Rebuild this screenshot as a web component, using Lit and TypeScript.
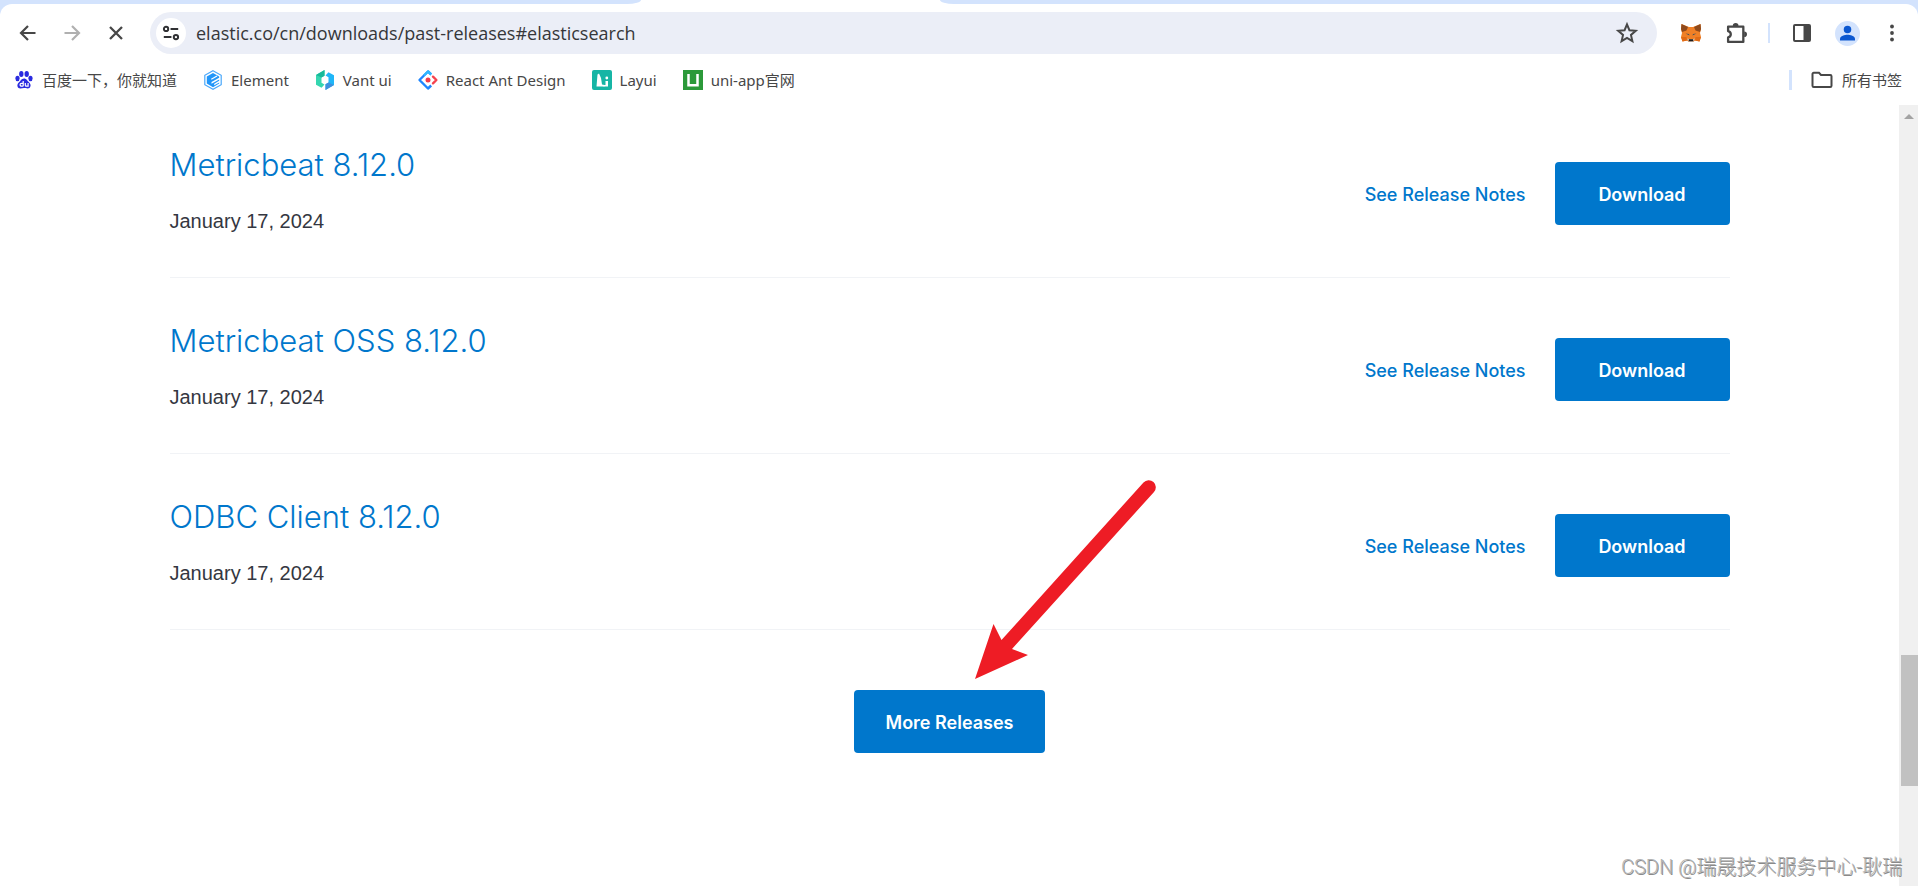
import { LitElement, html, css, svg, nothing } from 'lit';
import { customElement, property } from 'lit/decorators.js';

interface Release {
  name: string;
  date: string;
}

const releases: Release[] = [
  { name: 'Metricbeat 8.12.0', date: 'January 17, 2024' },
  { name: 'Metricbeat OSS 8.12.0', date: 'January 17, 2024' },
  { name: 'ODBC Client 8.12.0', date: 'January 17, 2024' },
];

const icons: Record<string, unknown> = {
  back: svg`<path d="M17.500 10H3.500M10 3 3 10l7 7" fill="none" stroke="#474747" stroke-width="2.200"/>`,
  forward: svg`<path d="M2.500 10h14M10 3l7 7-7 7" fill="none" stroke="#b0b0b0" stroke-width="2.200"/>`,
  stop: svg`<path d="M4 4l12 12M16 4 4 16" fill="none" stroke="#474747" stroke-width="2.300"/>`,
  tune: svg`<g fill="none" stroke="#303134" stroke-width="2.200"><circle cx="4.500" cy="5.500" r="2.400"/><path d="M9.500 5.500H18M2 14.500H10.500"/><circle cx="15.500" cy="14.500" r="2.400"/></g>`,
  star: svg`<path d="M10 2.200 12.200 7.500 18 8 13.600 11.800 14.900 17.400 10 14.400 5.100 17.400 6.400 11.800 2 8 7.800 7.500Z" fill="none" stroke="#474747" stroke-width="1.800" stroke-linejoin="miter"/>`,
  fox: svg`
    <path d="M0.500 1 8 4h4l7.500-3 .5 5-1 4 1 4-1.500 4.500L14 17.500 12 19H8l-2-1.500-4.500 1L0 14l1-4L0 6Z" fill="#f08026"/>
    <path d="M.5 1 7 4 5.500 7.500 1 9 0 6ZM19.500 1 13 4l1.500 3.500L19 9l1-3Z" fill="#8f4a1c"/>
    <path d="M0 14h5.500l.5 3.500-4.500 1ZM20 14h-5.500l-.5 3.500 4.500 1Z" fill="#e06a15"/>
    <path d="M6 15.500 8 19h4l2-3.500-2 .5H8Z" fill="#d0bfb2"/>
    <path d="M8 16.300h4l.4 2h-4.800Z" fill="#1d1a19"/>
    <path d="M4.500 10.500 8 11l.5 1.600ZM15.500 10.500 12 11l-.5 1.600Z" fill="#43505e"/>`,
  puzzle: svg`
    <path d="M2 3.500h14.500v14.500H2v-4.200c3.400-.9 3.400-5.200 0-6.100Z" fill="none" stroke="#474747" stroke-width="2.200" stroke-linejoin="round"/>
    <path d="M6.500 2.800a2.700 2.700 0 0 1 5.400 0ZM17.300 8a2.700 2.700 0 0 1 0 5.400Z" fill="#474747"/>`,
  panel: svg`<rect x="2" y="2" width="16" height="16" rx="1" fill="none" stroke="#474747" stroke-width="2"/><path d="M11.500 2H18v16h-6.500Z" fill="#474747"/>`,
  person: svg`<circle cx="10" cy="10" r="10" fill="#d3e3fd"/><circle cx="10" cy="6.800" r="3" fill="#0b57d0"/><path d="M4 15.500v-1.200c0-2.300 4-3.300 6-3.300s6 1 6 3.300v1.200Z" fill="#0b57d0"/>`,
  more: svg`<g fill="#474747"><circle cx="10" cy="3.500" r="1.900"/><circle cx="10" cy="10" r="1.900"/><circle cx="10" cy="16.500" r="1.900"/></g>`,
  folder: svg`<path d="M.5 4c0-.7.500-1.200 1.200-1.200h5.300l2 2.200h9.300c.7 0 1.200.5 1.200 1.200v9.600c0 .7-.5 1.200-1.200 1.200H1.700C1 17 .5 16.500 .5 15.800Z" fill="none" stroke="#474747" stroke-width="2"/>`,
  baidu: svg`
    <g fill="#2a2be0"><ellipse cx="3.500" cy="8.500" rx="2.100" ry="2.700"/><ellipse cx="7.300" cy="4" rx="2.200" ry="2.900"/><ellipse cx="12.700" cy="4" rx="2.200" ry="2.900"/><ellipse cx="16.500" cy="8.500" rx="2.100" ry="2.700"/>
    <path d="M10 8.500c2.600 0 3.300 2.400 5.200 4 2.600 2.300 1.300 6-1.600 6-1.300 0-2.200-.4-3.600-.4s-2.300.4-3.600.4c-3 0-4.200-3.700-1.600-6 2-1.700 2.600-4 5.200-4Z"/></g>
    <path d="M9.200 11v5.200M9.200 13.300H7.500a1.400 1.400 0 0 0 0 2.900h1.700M11.300 13v2.200c0 .7.400 1 1 1h1.800V13" fill="none" stroke="#fff" stroke-width="1.200"/>`,
  element: svg`
    <path d="M10 .7 18.200 5.300v9.400L10 19.300 1.800 14.700V5.300Z" fill="#fff" stroke="#4aa8fb" stroke-width="1.200"/>
    <path d="M10 3 16.200 6.500v1.300L8.500 12v1.800l7.700-4.300v1.300l-5 3v1.500l5-2.700v1L10 17.200 3.800 13.600V6.500Z" fill="#2196f9"/>
    <path d="M8.300 9.200 14 6" stroke="#fff" stroke-width="1.200"/>`,
  vant: svg`
    <path d="M9.500 0v5.800L6.500 7.500v5.200l3 1.800-3 3.200-5.500-3V5Z" fill="#35d6b0"/>
    <path d="M9.500 0v5.800L6.500 7.500 1 5Z" fill="#18b99a"/>
    <path d="M10.500 20v-5.800l3-1.700V7.300l-3-1.800 3-3.200 5.500 3V15Z" fill="#1fb6f8"/>
    <path d="M10.500 20v-5.800l3-1.700L19 15Z" fill="#3f8fdc"/>`,
  ant: svg`
    <path d="M13.200 4.500 10 1.500 1.500 10l8.500 8.500 3.200-3" fill="none" stroke="#1e86ff" stroke-width="2.400" stroke-linejoin="round"/>
    <path d="M13.200 4.500 10 1.500 6 5.500" fill="none" stroke="#2fb8ff" stroke-width="2.400" stroke-linejoin="round"/>
    <path d="M15 6.700 18.400 10 15 13.300" fill="none" stroke="#f5434f" stroke-width="2.400" stroke-linejoin="round" stroke-linecap="round"/>
    <circle cx="10" cy="10" r="2.500" fill="#f23b4c"/>`,
  layui: svg`<rect width="20" height="20" rx="2" fill="#16b5a5"/><path d="M4.500 16.500 5.500 4.500 7 3.500 9 8l1 6.500 2.500.5v1.500Z" fill="#fff"/><circle cx="14.800" cy="8" r="1.400" fill="#fff"/><path d="M11.500 16.500V15H13.500V11h2.500v5.500Z" fill="#fff"/>`,
  uniapp: svg`<rect width="20" height="20" fill="#2b9939"/><path d="M5.500 4v11.300h9V4" fill="none" stroke="#fff" stroke-width="2.500"/>`,
};

@customElement('ui-icon')
class UiIcon extends LitElement {
  @property() name = '';
  @property({ type: Number }) size = 20;

  static styles = css`
    :host { display: inline-flex; flex: none; }
    .glyph { display: block; overflow: visible; }
  `;

  render() {
    return html`<svg class="glyph" width=${this.size} height=${this.size} viewBox="0 0 20 20" aria-hidden="true">${icons[this.name] ?? nothing}</svg>`;
  }
}

@customElement('browser-bar')
class BrowserBar extends LitElement {
  static styles = css`
    :host {
      display: block;
      background: #d3e3fd;
      font-family: 'Noto Sans', 'Noto Sans CJK SC', sans-serif;
      color: #474747;
    }
    .tabs { display: flex; height: 4px; background: #fff; }
    .tab-before { width: 641px; background: #d3e3fd; border-bottom-right-radius: 14px 4px; }
    .tab-active { width: 299px; }
    .tab-after { flex: 1; background: #d3e3fd; border-bottom-left-radius: 14px 4px; }
    .panel { background: #fff; border-radius: 12px 12px 0 0; padding-bottom: 7px; }
    .toolbar { display: flex; align-items: center; height: 58px; padding: 0 10px 0 12px; }
    .nav { display: flex; gap: 12px; padding-right: 18px; }
    .tool {
      display: inline-flex;
      align-items: center;
      justify-content: center;
      width: 32px;
      height: 32px;
      padding: 0;
      border: 0;
      border-radius: 16px;
      background: none;
    }
    .address {
      display: flex;
      flex: 1;
      align-items: center;
      height: 42px;
      box-sizing: border-box;
      padding: 0 14px 0 6px;
      border-radius: 21px;
      background: #ebeef7;
    }
    .site { width: 30px; height: 30px; background: #fff; }
    .url {
      flex: 1;
      min-width: 0;
      padding: 0;
      margin-left: 10px;
      border: 0;
      outline: 0;
      background: none;
      font: 18px/24px 'Open Sans', sans-serif;
      color: #36373a;
    }
    .extras { display: flex; align-items: center; gap: 13px; padding-left: 18px; }
    .rule { width: 2px; height: 20px; margin: 0 3px; background: #d3e3fd; }
    .bookmarks { display: flex; align-items: center; height: 36px; gap: 26px; padding: 0 16px 0 14px; }
    .bookmark {
      display: inline-flex;
      align-items: center;
      gap: 8px;
      font-size: 15px;
      line-height: 20px;
      white-space: nowrap;
      color: #474747;
      text-decoration: none;
    }
    .all {
      gap: 10px;
      margin-left: auto;
      padding: 0 0 0 20px;
      border: 0;
      border-left: 3px solid #d3e3fd;
      background: none;
      font-family: inherit;
    }
  `;

  private tool(icon: string, label: string, size = 20) {
    return html`<button class="tool" type="button" aria-label=${label}><ui-icon name=${icon} size=${size}></ui-icon></button>`;
  }

  private bookmarks = [
    { icon: 'baidu', label: '百度一下，你就知道' },
    { icon: 'element', label: 'Element' },
    { icon: 'vant', label: 'Vant ui' },
    { icon: 'ant', label: 'React Ant Design' },
    { icon: 'layui', label: 'Layui' },
    { icon: 'uniapp', label: 'uni-app官网' },
  ];

  render() {
    return html`
      <div class="tabs"><div class="tab-before"></div><div class="tab-active"></div><div class="tab-after"></div></div>
      <div class="panel">
        <div class="toolbar">
          <div class="nav">
            ${this.tool('back', 'Back')} ${this.tool('forward', 'Forward')} ${this.tool('stop', 'Stop loading')}
          </div>
          <div class="address">
            <button class="tool site" type="button" aria-label="Site information"><ui-icon name="tune" size="18"></ui-icon></button>
            <input class="url" type="text" aria-label="Address" spellcheck="false" .value=${'elastic.co/cn/downloads/past-releases#elasticsearch'} />
            ${this.tool('star', 'Bookmark this page', 22)}
          </div>
          <div class="extras">
            ${this.tool('fox', 'MetaMask', 20)} ${this.tool('puzzle', 'Extensions', 21)}
            <span class="rule"></span>
            ${this.tool('panel', 'Side panel', 20)} ${this.tool('person', 'Profile', 25)} ${this.tool('more', 'Menu', 20)}
          </div>
        </div>
        <nav class="bookmarks">
          ${this.bookmarks.map((b) => html`<a class="bookmark" href="#"><ui-icon name=${b.icon}></ui-icon>${b.label}</a>`)}
          <button class="bookmark all" type="button"><ui-icon name="folder"></ui-icon>所有书签</button>
        </nav>
      </div>
    `;
  }
}

@customElement('release-row')
class ReleaseRow extends LitElement {
  @property({ attribute: false }) release!: Release;

  static styles = css`
    :host {
      display: flex;
      align-items: center;
      justify-content: space-between;
      padding-bottom: 35px;
      border-bottom: 1px solid #f1f3f6;
    }
    .info { display: flex; flex-direction: column; gap: 17px; padding-bottom: 2px; }
    .name { margin: 0; font: 300 31px/40px Inter, sans-serif; }
    .name-link, .notes { color: #0077cc; text-decoration: none; }
    .date { margin: 0; font: 20px/38px 'Liberation Sans', Arial, sans-serif; color: #343741; }
    .actions { display: flex; align-items: center; gap: 29px; font: 500 18px/27px Inter, sans-serif; }
    .notes { padding-top: 2px; }
    .download {
      min-width: 175px;
      box-sizing: border-box;
      padding: 19px 32px 17px;
      border-radius: 4px;
      background: #0077cc;
      color: #fff;
      font-weight: 600;
      text-align: center;
      text-decoration: none;
    }
  `;

  render() {
    return html`
      <div class="info">
        <h3 class="name"><a class="name-link" href="#">${this.release.name}</a></h3>
        <p class="date">${this.release.date}</p>
      </div>
      <div class="actions">
        <a class="notes" href="#">See Release Notes</a>
        <a class="download" href="#">Download</a>
      </div>
    `;
  }
}

@customElement('app-root')
class AppRoot extends LitElement {
  static styles = css`
    :host { display: flex; flex-direction: column; min-height: 100vh; position: relative; background: #fff; }
    .view { display: flex; flex: 1; }
    .page { position: relative; flex: 1; min-width: 0; padding: 40px 16px; }
    .list { display: flex; flex-direction: column; gap: 43px; max-width: 1560px; margin: 0 auto; }
    .foot { display: flex; justify-content: center; padding-top: 60px; }
    .more {
      padding: 19px 32px 17px;
      border: 0;
      border-radius: 4px;
      background: #0077cc;
      color: #fff;
      font: 600 18px/27px Inter, sans-serif;
    }
    .pointer { position: absolute; top: 370px; left: calc(50% + 20px); pointer-events: none; }
    .scroll { display: flex; flex-direction: column; width: 19px; background: #f0f0f0; }
    .scroll-up { display: flex; align-items: center; justify-content: center; height: 23px; }
    .before { flex: 527; }
    .thumb { flex: 131; margin-left: 2px; background: #c1c1c1; }
    .after { flex: 100; }
    .watermark {
      position: absolute;
      right: 16px;
      bottom: 6px;
      font: 300 20px/26px Roboto, 'Noto Sans CJK SC', sans-serif;
      color: #b4b4b4;
      text-shadow: 1px 1px 0 #8a8a8a;
    }
  `;

  render() {
    return html`
      <browser-bar></browser-bar>
      <div class="view">
        <main class="page">
          <div class="list">${releases.map((r) => html`<release-row .release=${r}></release-row>`)}</div>
          <div class="foot"><button class="more" type="button">More Releases</button></div>
          <svg class="pointer" width="190" height="210" viewBox="970 475 190 210" aria-hidden="true">
            <path d="M975 679 993.500 624 1001.500 640 1143.500 482.500A7 7 0 0 1 1154 492L1012 649 1028 655Z" fill="#ee1c25" />
          </svg>
        </main>
        <div class="scroll">
          <div class="scroll-up"><svg width="10" height="5" viewBox="0 0 10 5" aria-hidden="true"><path d="M5 0 10 5H0Z" fill="#a3a3a3" /></svg></div>
          <div class="before"></div>
          <div class="thumb"></div>
          <div class="after"></div>
        </div>
      </div>
      <div class="watermark">CSDN @瑞晟技术服务中心-耿瑞</div>
    `;
  }
}
